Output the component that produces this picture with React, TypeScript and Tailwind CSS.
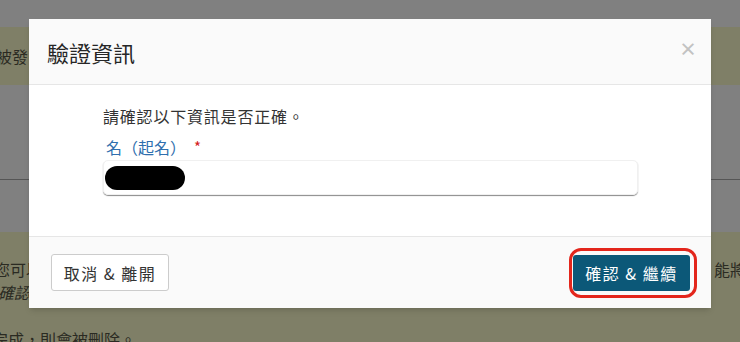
import React from 'react'

const font = { fontFamily: '"Noto Sans CJK TC", "Noto Sans", sans-serif' }

function PageBehind() {
  return (
    <div className="flex flex-col w-full h-full text-[16px] text-[#2a2a22]">
      <div className="h-[27px] shrink-0" />
      <div className="h-[58px] shrink-0 bg-[#7f7f67] flex items-center">
        <span className="-ml-[4px]">被發</span>
        <span className="flex-1" />
      </div>
      <div className="h-[94px] shrink-0" />
      <div className="h-px shrink-0 bg-[#555555]" />
      <div className="h-[52px] shrink-0" />
      <div className="flex-1 bg-[#7f7f67] flex flex-col pt-[26px] leading-[23px]">
        <div className="flex justify-between">
          <span className="-ml-[6px]">您可以</span>
          <span className="-mr-[22px]">能將您</span>
        </div>
        <span className="italic -ml-[2px]">確認</span>
        <span className="mt-[24px] -ml-[8px]">完成，則會被刪除。</span>
      </div>
    </div>
  )
}

export default function App() {
  return (
    <div className="relative w-[740px] h-[342px] overflow-hidden bg-[#808080]" style={font}>
      <PageBehind />

      {/* modal */}
      <div className="absolute left-[29px] top-[19px] w-[682px] h-[289px] bg-white flex flex-col shadow-md">
        <div className="h-[66px] bg-[#fafafa] border-b border-[#e6e6e6] flex items-center justify-between pl-[18px] pr-[14px]">
          <h2 className="text-[22px] text-[#262626] font-normal leading-none">驗證資訊</h2>
          <span className="text-[#c2c2c2] text-[18px] font-bold leading-none -mt-[7px]">×</span>
        </div>

        <div className="flex-1 pl-[74px] pr-[73px] pt-[20px]">
          <p className="text-[16px] text-[#333333] leading-[22px] tracking-[0.8px]">請確認以下資訊是否正確。</p>
          <div className="mt-[9px] flex items-start leading-[22px]">
            <span className="text-[16px] text-[#2f6fae] ml-[3px]">名（起名）</span>
            <span className="text-[#d42020] text-[15px] ml-[8px]">*</span>
          </div>
          <div className="mt-[2px] h-[35px] rounded-[5px] border border-[#f0f0f0] shadow-[0_1px_1px_#8a8a8a] flex items-center">
            <div className="ml-[1px] w-[80px] h-[24px] rounded-full bg-black" />
          </div>
        </div>

        <div className="h-[72px] bg-[#fafafa] border-t border-[#e6e6e6] flex items-center justify-between pl-[22px] pr-[14px]">
          <button className="h-[37px] w-[118px] bg-white border border-[#cccccc] rounded-[3px] text-[16px] text-[#333333] tracking-[1.5px]">
            取消 &amp; 離開
          </button>
          <div className="rounded-[12px] border-[3px] border-[#e3261c] pl-[1px] pr-[4px] py-[4px]">
            <button className="h-[36px] w-[117px] bg-[#0c5878] rounded-[3px] text-[16px] text-white tracking-[1.5px]">
              確認 &amp; 繼續
            </button>
          </div>
        </div>
      </div>
    </div>
  )
}
